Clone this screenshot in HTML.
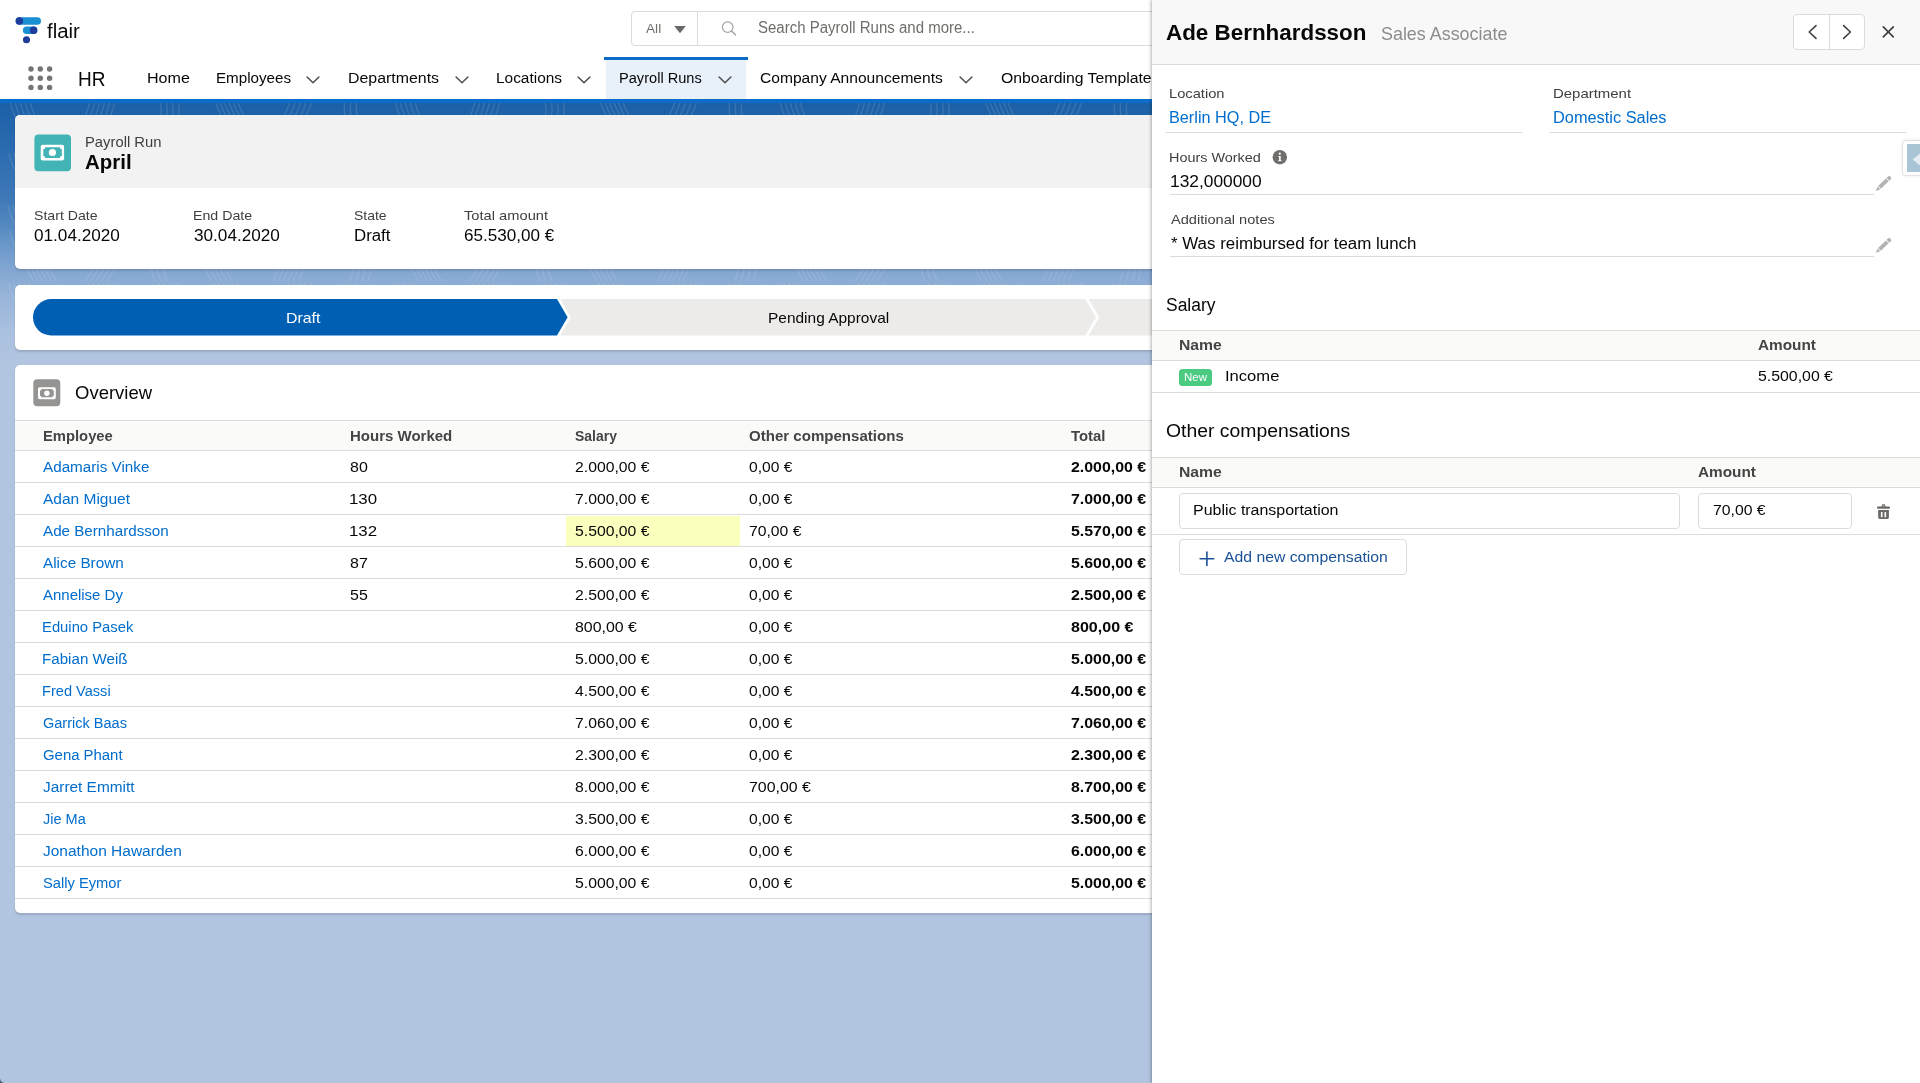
<!DOCTYPE html>
<html lang="en">
<head>
<meta charset="utf-8">
<title>April | Payroll Run | flair HR</title>
<style>
*{box-sizing:border-box;margin:0;padding:0}
html,body{width:1920px;height:1083px;overflow:hidden}
body{position:relative;background:#b1c5e0;font-family:"Liberation Sans",sans-serif;color:#080707}
.abs,.t{position:absolute}
.t{white-space:nowrap;line-height:1;display:block;transform-origin:0 0}
a.t{text-decoration:none}
#banner{left:0;top:101px;width:1152px;height:262px;background:linear-gradient(180deg,#1b5fa6 0px,#2467ad 30px,#2d6db1 55px,#3f79b8 99px,#5589c1 125px,#6f9bcb 149px,#87a9d3 174px,#9ab6da 199px,#a9c0df 229px,#b1c5e0 259px)}
#hdr{left:0;top:0;width:1920px;height:99px;background:#fff}
#hdrline{left:0;top:99px;width:1920px;height:4px;background:#0b6cc9}
.card{background:#fff;border-radius:5px;box-shadow:0 2px 2px rgba(0,0,0,.13),0 0 1px rgba(0,0,0,.10)}
.hl{height:1px;background:#dddbda}
#panel{left:1152px;top:0;width:768px;height:1083px;background:#fff;box-shadow:-1px 0 3px rgba(0,0,0,.30)}
#panel .in{position:absolute;left:-1152px;top:0;width:1920px;height:1083px}
.box{background:#fff;border:1px solid #dddbda;border-radius:4px}
</style>
</head>
<body>
<div class="abs" id="banner"></div>
<!--TOPO-->
<svg class="abs" style="left:0;top:101px" width="1152" height="262" viewBox="0 0 1152 262">
<defs><pattern id="topo" width="385" height="130" patternUnits="userSpaceOnUse"><path d="M10.0 0 Q12.0 12.0 20.0 24 M15.0 0 Q17.0 12.0 25.0 24 M20.0 0 Q22.0 12.0 30.0 24 M25.0 0 Q27.0 12.0 35.0 24 M30.0 0 Q32.0 12.0 40.0 24 M90.0 0 Q87.5 12.0 81.0 24 M95.0 0 Q92.5 12.0 86.0 24 M100.0 0 Q97.5 12.0 91.0 24 M105.0 0 Q102.5 12.0 96.0 24 M110.0 0 Q107.5 12.0 101.0 24 M115.0 0 Q112.5 12.0 106.0 24 M160.0 0 Q163.0 12.0 158.0 24 M166.0 0 Q169.0 12.0 164.0 24 M172.0 0 Q175.0 12.0 170.0 24 M178.0 0 Q181.0 12.0 176.0 24 M215.0 0 Q219.0 12.0 227.0 24 M219.5 0 Q223.5 12.0 231.5 24 M224.0 0 Q228.0 12.0 236.0 24 M228.5 0 Q232.5 12.0 240.5 24 M233.0 0 Q237.0 12.0 245.0 24 M237.5 0 Q241.5 12.0 249.5 24 M290.0 0 Q287.0 12.0 278.0 24 M295.5 0 Q292.5 12.0 283.5 24 M301.0 0 Q298.0 12.0 289.0 24 M306.5 0 Q303.5 12.0 294.5 24 M312.0 0 Q309.0 12.0 300.0 24 M345.0 0 Q342.5 12.0 348.0 24 M351.0 0 Q348.5 12.0 354.0 24 M357.0 0 Q354.5 12.0 360.0 24 M202.0 26 Q204.0 38.0 212.0 50 M207.0 26 Q209.0 38.0 217.0 50 M212.0 26 Q214.0 38.0 222.0 50 M217.0 26 Q219.0 38.0 227.0 50 M222.0 26 Q224.0 38.0 232.0 50 M282.0 26 Q279.5 38.0 273.0 50 M287.0 26 Q284.5 38.0 278.0 50 M292.0 26 Q289.5 38.0 283.0 50 M297.0 26 Q294.5 38.0 288.0 50 M302.0 26 Q299.5 38.0 293.0 50 M307.0 26 Q304.5 38.0 298.0 50 M352.0 26 Q355.0 38.0 350.0 50 M358.0 26 Q361.0 38.0 356.0 50 M364.0 26 Q367.0 38.0 362.0 50 M370.0 26 Q373.0 38.0 368.0 50 M22.0 26 Q26.0 38.0 34.0 50 M26.5 26 Q30.5 38.0 38.5 50 M31.0 26 Q35.0 38.0 43.0 50 M35.5 26 Q39.5 38.0 47.5 50 M40.0 26 Q44.0 38.0 52.0 50 M44.5 26 Q48.5 38.0 56.5 50 M97.0 26 Q94.0 38.0 85.0 50 M102.5 26 Q99.5 38.0 90.5 50 M108.0 26 Q105.0 38.0 96.0 50 M113.5 26 Q110.5 38.0 101.5 50 M119.0 26 Q116.0 38.0 107.0 50 M152.0 26 Q149.5 38.0 155.0 50 M158.0 26 Q155.5 38.0 161.0 50 M164.0 26 Q161.5 38.0 167.0 50 M9.0 52 Q11.0 64.0 19.0 76 M14.0 52 Q16.0 64.0 24.0 76 M19.0 52 Q21.0 64.0 29.0 76 M24.0 52 Q26.0 64.0 34.0 76 M29.0 52 Q31.0 64.0 39.0 76 M89.0 52 Q86.5 64.0 80.0 76 M94.0 52 Q91.5 64.0 85.0 76 M99.0 52 Q96.5 64.0 90.0 76 M104.0 52 Q101.5 64.0 95.0 76 M109.0 52 Q106.5 64.0 100.0 76 M114.0 52 Q111.5 64.0 105.0 76 M159.0 52 Q162.0 64.0 157.0 76 M165.0 52 Q168.0 64.0 163.0 76 M171.0 52 Q174.0 64.0 169.0 76 M177.0 52 Q180.0 64.0 175.0 76 M214.0 52 Q218.0 64.0 226.0 76 M218.5 52 Q222.5 64.0 230.5 76 M223.0 52 Q227.0 64.0 235.0 76 M227.5 52 Q231.5 64.0 239.5 76 M232.0 52 Q236.0 64.0 244.0 76 M236.5 52 Q240.5 64.0 248.5 76 M289.0 52 Q286.0 64.0 277.0 76 M294.5 52 Q291.5 64.0 282.5 76 M300.0 52 Q297.0 64.0 288.0 76 M305.5 52 Q302.5 64.0 293.5 76 M311.0 52 Q308.0 64.0 299.0 76 M344.0 52 Q341.5 64.0 347.0 76 M350.0 52 Q347.5 64.0 353.0 76 M356.0 52 Q353.5 64.0 359.0 76 M201.0 78 Q203.0 90.0 211.0 102 M206.0 78 Q208.0 90.0 216.0 102 M211.0 78 Q213.0 90.0 221.0 102 M216.0 78 Q218.0 90.0 226.0 102 M221.0 78 Q223.0 90.0 231.0 102 M281.0 78 Q278.5 90.0 272.0 102 M286.0 78 Q283.5 90.0 277.0 102 M291.0 78 Q288.5 90.0 282.0 102 M296.0 78 Q293.5 90.0 287.0 102 M301.0 78 Q298.5 90.0 292.0 102 M306.0 78 Q303.5 90.0 297.0 102 M351.0 78 Q354.0 90.0 349.0 102 M357.0 78 Q360.0 90.0 355.0 102 M363.0 78 Q366.0 90.0 361.0 102 M369.0 78 Q372.0 90.0 367.0 102 M21.0 78 Q25.0 90.0 33.0 102 M25.5 78 Q29.5 90.0 37.5 102 M30.0 78 Q34.0 90.0 42.0 102 M34.5 78 Q38.5 90.0 46.5 102 M39.0 78 Q43.0 90.0 51.0 102 M43.5 78 Q47.5 90.0 55.5 102 M96.0 78 Q93.0 90.0 84.0 102 M101.5 78 Q98.5 90.0 89.5 102 M107.0 78 Q104.0 90.0 95.0 102 M112.5 78 Q109.5 90.0 100.5 102 M118.0 78 Q115.0 90.0 106.0 102 M151.0 78 Q148.5 90.0 154.0 102 M157.0 78 Q154.5 90.0 160.0 102 M163.0 78 Q160.5 90.0 166.0 102 M8.0 104 Q10.0 116.0 18.0 128 M13.0 104 Q15.0 116.0 23.0 128 M18.0 104 Q20.0 116.0 28.0 128 M23.0 104 Q25.0 116.0 33.0 128 M28.0 104 Q30.0 116.0 38.0 128 M88.0 104 Q85.5 116.0 79.0 128 M93.0 104 Q90.5 116.0 84.0 128 M98.0 104 Q95.5 116.0 89.0 128 M103.0 104 Q100.5 116.0 94.0 128 M108.0 104 Q105.5 116.0 99.0 128 M113.0 104 Q110.5 116.0 104.0 128 M158.0 104 Q161.0 116.0 156.0 128 M164.0 104 Q167.0 116.0 162.0 128 M170.0 104 Q173.0 116.0 168.0 128 M176.0 104 Q179.0 116.0 174.0 128 M213.0 104 Q217.0 116.0 225.0 128 M217.5 104 Q221.5 116.0 229.5 128 M222.0 104 Q226.0 116.0 234.0 128 M226.5 104 Q230.5 116.0 238.5 128 M231.0 104 Q235.0 116.0 243.0 128 M235.5 104 Q239.5 116.0 247.5 128 M288.0 104 Q285.0 116.0 276.0 128 M293.5 104 Q290.5 116.0 281.5 128 M299.0 104 Q296.0 116.0 287.0 128 M304.5 104 Q301.5 116.0 292.5 128 M310.0 104 Q307.0 116.0 298.0 128 M343.0 104 Q340.5 116.0 346.0 128 M349.0 104 Q346.5 116.0 352.0 128 M355.0 104 Q352.5 116.0 358.0 128" fill="none" stroke="#fff" stroke-opacity=".13" stroke-width="1.2"/></pattern>
<linearGradient id="tfade" x1="0" y1="0" x2="0" y2="1"><stop offset="0" stop-color="#fff" stop-opacity="1"/><stop offset=".7" stop-color="#fff" stop-opacity=".9"/><stop offset="1" stop-color="#fff" stop-opacity="0"/></linearGradient>
<mask id="tmask"><rect width="1152" height="262" fill="url(#tfade)"/></mask></defs>
<rect width="1152" height="262" fill="url(#topo)" mask="url(#tmask)"/></svg>
<div class="abs" id="hdr"></div>
<div class="abs" id="hdrline"></div>

<!-- logo -->
<svg class="abs" style="left:14px;top:15px" width="30" height="32" viewBox="14 15 30 32">
<rect x="15.6" y="17.3" width="25.4" height="7.5" rx="3.75" fill="#1a8fd1"/>
<circle cx="19.4" cy="21.05" r="3.75" fill="#1e3c9c"/>
<rect x="22.9" y="26.5" width="14.4" height="7.5" rx="3.75" fill="#1a8fd1"/>
<circle cx="33.6" cy="30.25" r="3.75" fill="#1e3c9c"/>
<circle cx="26.5" cy="39.8" r="3.55" fill="#1e3c9c"/>
</svg>

<!-- search -->
<div class="abs box" style="left:631px;top:11px;width:560px;height:35px;border-color:#dddbda"></div>
<div class="abs" style="left:697px;top:12px;width:1px;height:33px;background:#dddbda"></div>
<svg class="abs" style="left:670px;top:20px" width="72" height="20" viewBox="670 20 72 20"><path d="M674.2 25.9 L685.8 25.9 L680 33.3 Z" fill="#6b6966"/><circle cx="727.7" cy="27.1" r="5.3" fill="none" stroke="#a5a3a1" stroke-width="1.25"/><path d="M731.6 31 L735.6 34.9" stroke="#a5a3a1" stroke-width="1.4" stroke-linecap="round"/></svg>

<!-- nav -->
<svg class="abs" style="left:28px;top:66px" width="25" height="25" viewBox="0 0 25 25" fill="#747474">
<circle cx="3" cy="3" r="2.7"/><circle cx="12.3" cy="3" r="2.7"/><circle cx="21.6" cy="3" r="2.7"/>
<circle cx="3" cy="12.2" r="2.7"/><circle cx="12.3" cy="12.2" r="2.7"/><circle cx="21.6" cy="12.2" r="2.7"/>
<circle cx="3" cy="21.4" r="2.7"/><circle cx="12.3" cy="21.4" r="2.7"/><circle cx="21.6" cy="21.4" r="2.7"/>
</svg>
<div class="abs" style="left:606px;top:58px;width:140px;height:41px;background:#e8f0fa"></div>
<div class="abs" style="left:604px;top:56.5px;width:143.5px;height:3.6px;background:#0b6cc9"></div>
<svg class="abs" style="left:305.3px;top:74px" width="16" height="12" viewBox="0 0 16 12"><path d="M2.1 3 L8 8.7 L13.9 3" fill="none" stroke="#514f4d" stroke-width="1.55" stroke-linecap="round" stroke-linejoin="round"/></svg>
<svg class="abs" style="left:453.7px;top:74px" width="16" height="12" viewBox="0 0 16 12"><path d="M2.1 3 L8 8.7 L13.9 3" fill="none" stroke="#514f4d" stroke-width="1.55" stroke-linecap="round" stroke-linejoin="round"/></svg>
<svg class="abs" style="left:576.0px;top:74px" width="16" height="12" viewBox="0 0 16 12"><path d="M2.1 3 L8 8.7 L13.9 3" fill="none" stroke="#514f4d" stroke-width="1.55" stroke-linecap="round" stroke-linejoin="round"/></svg>
<svg class="abs" style="left:716.6px;top:74px" width="16" height="12" viewBox="0 0 16 12"><path d="M2.1 3 L8 8.7 L13.9 3" fill="none" stroke="#514f4d" stroke-width="1.55" stroke-linecap="round" stroke-linejoin="round"/></svg>
<svg class="abs" style="left:958.0px;top:74px" width="16" height="12" viewBox="0 0 16 12"><path d="M2.1 3 L8 8.7 L13.9 3" fill="none" stroke="#514f4d" stroke-width="1.55" stroke-linecap="round" stroke-linejoin="round"/></svg>


<!-- card 1 -->
<div class="abs card" style="left:14.5px;top:115px;width:1160px;height:154px;overflow:hidden">
  <div class="abs" style="left:0;top:0;width:1160px;height:73px;background:#f3f2f2"></div>
</div>
<svg class="abs" style="left:34px;top:134px" width="38" height="38" viewBox="34 134 38 38">
<rect x="34.4" y="134.4" width="36.6" height="36.8" rx="4" fill="#42b4b5"/>
<rect x="40.7" y="144.8" width="23.4" height="15.7" rx="2" fill="#fff"/>
<path d="M45.3 147.3 H59.8 Q59.8 149.3 61.8 149.3 V156 Q59.8 156 59.8 158 H45.3 Q45.3 156 43.3 156 V149.3 Q45.3 149.3 45.3 147.3 Z" fill="#42b4b5"/>
<circle cx="52.4" cy="152.5" r="3.6" fill="#fff"/>
</svg>

<!-- card 2 : path -->
<div class="abs card" style="left:14.5px;top:284.6px;width:1160px;height:65px"></div>
<svg class="abs" style="left:30px;top:297px" width="1130" height="42" viewBox="30 297 1130 42">
<path d="M560.2 299.1 L1085.4 299.1 L1096 317.3 L1085.4 335.5 L560.2 335.5 L570.8 317.3 Z" fill="#ecebea"/>
<path d="M1088.6 299.1 L1160 299.1 L1160 335.5 L1088.6 335.5 L1099.2 317.3 Z" fill="#ecebea"/>
<path d="M51.2 299.1 L557 299.1 L567.6 317.3 L557 335.5 L51.2 335.5 A18.2 18.2 0 0 1 51.2 299.1 Z" fill="#005fb2"/>
</svg>

<!-- card 3 : overview -->
<div class="abs card" style="left:14.5px;top:365px;width:1160px;height:548.4px"></div>
<svg class="abs" style="left:33px;top:379px" width="28" height="28" viewBox="33 379 28 28">
<rect x="33.3" y="379.2" width="27" height="27" rx="4" fill="#969492"/>
<rect x="38" y="387.2" width="17.8" height="12" rx="1.6" fill="#fff"/>
<path d="M41.5 389.1 H52.3 Q52.3 390.6 53.8 390.6 V395.8 Q52.3 395.8 52.3 397.3 H41.5 Q41.5 395.8 40 395.8 V390.6 Q41.5 390.6 41.5 389.1 Z" fill="#969492"/>
<circle cx="46.9" cy="393.2" r="2.7" fill="#fff"/>
</svg>
<div class="abs" style="left:15px;top:421px;width:1160px;height:30px;background:#fafaf9"></div>
<div class="abs hl" style="left:15px;top:420px;width:1160px"></div>
<div class="abs hl" style="left:15px;top:450px;width:1160px"></div>
<div class="abs hl" style="left:15px;top:482px;width:1160px"></div>
<div class="abs hl" style="left:15px;top:514px;width:1160px"></div>
<div class="abs hl" style="left:15px;top:546px;width:1160px"></div>
<div class="abs hl" style="left:15px;top:578px;width:1160px"></div>
<div class="abs hl" style="left:15px;top:610px;width:1160px"></div>
<div class="abs hl" style="left:15px;top:642px;width:1160px"></div>
<div class="abs hl" style="left:15px;top:674px;width:1160px"></div>
<div class="abs hl" style="left:15px;top:706px;width:1160px"></div>
<div class="abs hl" style="left:15px;top:738px;width:1160px"></div>
<div class="abs hl" style="left:15px;top:770px;width:1160px"></div>
<div class="abs hl" style="left:15px;top:802px;width:1160px"></div>
<div class="abs hl" style="left:15px;top:834px;width:1160px"></div>
<div class="abs hl" style="left:15px;top:866px;width:1160px"></div>
<div class="abs hl" style="left:15px;top:898px;width:1160px"></div>

<div class="abs" style="left:566px;top:515.5px;width:174px;height:30.5px;background:#faffbd"></div>

<span class="t" style="left:46.90px;top:22px;font-size:19.4px;transform:scaleX(1.0539);color:#0b0b0b">flair</span>
<span class="t" style="left:646.00px;top:22px;font-size:13.4px;transform:scaleX(1.0197);color:#706e6b">All</span>
<span class="t" style="left:757.70px;top:20px;font-size:15.6px;transform:scaleX(0.9624);color:#706e6b">Search Payroll Runs and more...</span>
<span class="t" style="left:77.79px;top:69px;font-size:20.8px;transform:scaleX(0.9132);color:#080707">HR</span>
<span class="t" style="left:146.65px;top:70px;font-size:15.4px;transform:scaleX(1.0457);color:#080707">Home</span>
<span class="t" style="left:216.31px;top:70px;font-size:15.4px;transform:scaleX(0.9862);color:#080707">Employees</span>
<span class="t" style="left:347.97px;top:70px;font-size:15.4px;transform:scaleX(1.0331);color:#080707">Departments</span>
<span class="t" style="left:496.00px;top:70px;font-size:15.4px;transform:scaleX(1.0017);color:#080707">Locations</span>
<span class="t" style="left:619.45px;top:70px;font-size:15.4px;transform:scaleX(0.9485);color:#080707">Payroll Runs</span>
<span class="t" style="left:760.00px;top:70px;font-size:15.4px;transform:scaleX(1.0128);color:#080707">Company Announcements</span>
<span class="t" style="left:1001.30px;top:70px;font-size:15.4px;transform:scaleX(1.0253);color:#080707">Onboarding Template</span>
<span class="t" style="left:1152.80px;top:70px;font-size:15.4px;transform:scaleX(0.8125);color:#080707">s</span>
<span class="t" style="left:84.66px;top:135px;font-size:14.2px;transform:scaleX(1.0428);color:#3e3e3c">Payroll Run</span>
<span class="t" style="left:84.60px;top:152px;font-size:20.8px;transform:scaleX(0.9830);color:#080707;font-weight:700">April</span>
<span class="t" style="left:34.00px;top:209px;font-size:13.6px;transform:scaleX(1.0389);color:#3e3e3c">Start Date</span>
<span class="t" style="left:34.00px;top:228px;font-size:16px;transform:scaleX(1.0726);color:#080707">01.04.2020</span>
<span class="t" style="left:192.96px;top:209px;font-size:13.6px;transform:scaleX(1.0432);color:#3e3e3c">End Date</span>
<span class="t" style="left:194.00px;top:228px;font-size:16px;transform:scaleX(1.0726);color:#080707">30.04.2020</span>
<span class="t" style="left:354.00px;top:209px;font-size:13.6px;transform:scaleX(1.0263);color:#3e3e3c">State</span>
<span class="t" style="left:353.55px;top:228px;font-size:16px;transform:scaleX(1.0518);color:#080707">Draft</span>
<span class="t" style="left:463.70px;top:209px;font-size:13.6px;transform:scaleX(1.0800);color:#3e3e3c">Total amount</span>
<span class="t" style="left:464.10px;top:228px;font-size:16px;transform:scaleX(1.0671);color:#080707">65.530,00 €</span>
<span class="t" style="left:285.61px;top:311px;font-size:14.6px;transform:scaleX(1.0893);color:#ffffff">Draft</span>
<span class="t" style="left:768.24px;top:311px;font-size:14.6px;transform:scaleX(1.0591);color:#080707">Pending Approval</span>
<span class="t" style="left:75.00px;top:384px;font-size:18.4px;transform:scaleX(1.0057);color:#080707">Overview</span>
<span class="t" style="left:42.70px;top:429px;font-size:14.7px;transform:scaleX(1.0055);color:#444444;font-weight:700">Employee</span>
<span class="t" style="left:350.00px;top:429px;font-size:14.7px;transform:scaleX(1.0218);color:#444444;font-weight:700">Hours Worked</span>
<span class="t" style="left:575.00px;top:429px;font-size:14.7px;transform:scaleX(0.9504);color:#444444;font-weight:700">Salary</span>
<span class="t" style="left:748.70px;top:429px;font-size:14.7px;transform:scaleX(1.0251);color:#444444;font-weight:700">Other compensations</span>
<span class="t" style="left:1071.00px;top:429px;font-size:14.7px;transform:scaleX(1.0114);color:#444444;font-weight:700">Total</span>
<span class="t" style="left:42.70px;top:459px;font-size:15.2px;transform:scaleX(1.0034);color:#006dcc">Adamaris Vinke</span>
<span class="t" style="left:350.00px;top:459px;font-size:15.2px;transform:scaleX(1.0519);color:#080707">80</span>
<span class="t" style="left:575.00px;top:459px;font-size:15.2px;transform:scaleX(1.0368);color:#080707">2.000,00 €</span>
<span class="t" style="left:748.70px;top:459px;font-size:15.2px;transform:scaleX(1.0285);color:#080707">0,00 €</span>
<span class="t" style="left:1071.00px;top:459px;font-size:15.2px;transform:scaleX(1.0465);color:#080707;font-weight:700">2.000,00 €</span>
<span class="t" style="left:42.70px;top:491px;font-size:15.2px;transform:scaleX(1.0203);color:#006dcc">Adan Miguet</span>
<span class="t" style="left:348.89px;top:491px;font-size:15.2px;transform:scaleX(1.1091);color:#080707">130</span>
<span class="t" style="left:575.00px;top:491px;font-size:15.2px;transform:scaleX(1.0368);color:#080707">7.000,00 €</span>
<span class="t" style="left:748.70px;top:491px;font-size:15.2px;transform:scaleX(1.0285);color:#080707">0,00 €</span>
<span class="t" style="left:1071.00px;top:491px;font-size:15.2px;transform:scaleX(1.0465);color:#080707;font-weight:700">7.000,00 €</span>
<span class="t" style="left:42.70px;top:523px;font-size:15.2px;transform:scaleX(0.9996);color:#006dcc">Ade Bernhardsson</span>
<span class="t" style="left:348.89px;top:523px;font-size:15.2px;transform:scaleX(1.1091);color:#080707">132</span>
<span class="t" style="left:575.00px;top:523px;font-size:15.2px;transform:scaleX(1.0368);color:#080707">5.500,00 €</span>
<span class="t" style="left:748.70px;top:523px;font-size:15.2px;transform:scaleX(1.0346);color:#080707">70,00 €</span>
<span class="t" style="left:1071.00px;top:523px;font-size:15.2px;transform:scaleX(1.0465);color:#080707;font-weight:700">5.570,00 €</span>
<span class="t" style="left:42.70px;top:555px;font-size:15.2px;transform:scaleX(1.0070);color:#006dcc">Alice Brown</span>
<span class="t" style="left:350.00px;top:555px;font-size:15.2px;transform:scaleX(1.0519);color:#080707">87</span>
<span class="t" style="left:575.00px;top:555px;font-size:15.2px;transform:scaleX(1.0368);color:#080707">5.600,00 €</span>
<span class="t" style="left:748.70px;top:555px;font-size:15.2px;transform:scaleX(1.0285);color:#080707">0,00 €</span>
<span class="t" style="left:1071.00px;top:555px;font-size:15.2px;transform:scaleX(1.0465);color:#080707;font-weight:700">5.600,00 €</span>
<span class="t" style="left:42.70px;top:587px;font-size:15.2px;transform:scaleX(0.9859);color:#006dcc">Annelise Dy</span>
<span class="t" style="left:350.00px;top:587px;font-size:15.2px;transform:scaleX(1.0519);color:#080707">55</span>
<span class="t" style="left:575.00px;top:587px;font-size:15.2px;transform:scaleX(1.0368);color:#080707">2.500,00 €</span>
<span class="t" style="left:748.70px;top:587px;font-size:15.2px;transform:scaleX(1.0285);color:#080707">0,00 €</span>
<span class="t" style="left:1071.00px;top:587px;font-size:15.2px;transform:scaleX(1.0465);color:#080707;font-weight:700">2.500,00 €</span>
<span class="t" style="left:41.72px;top:619px;font-size:15.2px;transform:scaleX(0.9750);color:#006dcc">Eduino Pasek</span>
<span class="t" style="left:575.00px;top:619px;font-size:15.2px;transform:scaleX(1.0474);color:#080707">800,00 €</span>
<span class="t" style="left:748.70px;top:619px;font-size:15.2px;transform:scaleX(1.0285);color:#080707">0,00 €</span>
<span class="t" style="left:1071.00px;top:619px;font-size:15.2px;transform:scaleX(1.0558);color:#080707;font-weight:700">800,00 €</span>
<span class="t" style="left:41.70px;top:651px;font-size:15.2px;transform:scaleX(0.9972);color:#006dcc">Fabian Weiß</span>
<span class="t" style="left:575.00px;top:651px;font-size:15.2px;transform:scaleX(1.0368);color:#080707">5.000,00 €</span>
<span class="t" style="left:748.70px;top:651px;font-size:15.2px;transform:scaleX(1.0285);color:#080707">0,00 €</span>
<span class="t" style="left:1071.00px;top:651px;font-size:15.2px;transform:scaleX(1.0465);color:#080707;font-weight:700">5.000,00 €</span>
<span class="t" style="left:41.74px;top:683px;font-size:15.2px;transform:scaleX(0.9603);color:#006dcc">Fred Vassi</span>
<span class="t" style="left:575.00px;top:683px;font-size:15.2px;transform:scaleX(1.0368);color:#080707">4.500,00 €</span>
<span class="t" style="left:748.70px;top:683px;font-size:15.2px;transform:scaleX(1.0285);color:#080707">0,00 €</span>
<span class="t" style="left:1071.00px;top:683px;font-size:15.2px;transform:scaleX(1.0465);color:#080707;font-weight:700">4.500,00 €</span>
<span class="t" style="left:42.70px;top:715px;font-size:15.2px;transform:scaleX(0.9560);color:#006dcc">Garrick Baas</span>
<span class="t" style="left:575.00px;top:715px;font-size:15.2px;transform:scaleX(1.0368);color:#080707">7.060,00 €</span>
<span class="t" style="left:748.70px;top:715px;font-size:15.2px;transform:scaleX(1.0285);color:#080707">0,00 €</span>
<span class="t" style="left:1071.00px;top:715px;font-size:15.2px;transform:scaleX(1.0465);color:#080707;font-weight:700">7.060,00 €</span>
<span class="t" style="left:42.70px;top:747px;font-size:15.2px;transform:scaleX(0.9812);color:#006dcc">Gena Phant</span>
<span class="t" style="left:575.00px;top:747px;font-size:15.2px;transform:scaleX(1.0368);color:#080707">2.300,00 €</span>
<span class="t" style="left:748.70px;top:747px;font-size:15.2px;transform:scaleX(1.0285);color:#080707">0,00 €</span>
<span class="t" style="left:1071.00px;top:747px;font-size:15.2px;transform:scaleX(1.0465);color:#080707;font-weight:700">2.300,00 €</span>
<span class="t" style="left:42.70px;top:779px;font-size:15.2px;transform:scaleX(1.0135);color:#006dcc">Jarret Emmitt</span>
<span class="t" style="left:575.00px;top:779px;font-size:15.2px;transform:scaleX(1.0368);color:#080707">8.000,00 €</span>
<span class="t" style="left:748.70px;top:779px;font-size:15.2px;transform:scaleX(1.0474);color:#080707">700,00 €</span>
<span class="t" style="left:1071.00px;top:779px;font-size:15.2px;transform:scaleX(1.0465);color:#080707;font-weight:700">8.700,00 €</span>
<span class="t" style="left:42.70px;top:811px;font-size:15.2px;transform:scaleX(0.9562);color:#006dcc">Jie Ma</span>
<span class="t" style="left:575.00px;top:811px;font-size:15.2px;transform:scaleX(1.0368);color:#080707">3.500,00 €</span>
<span class="t" style="left:748.70px;top:811px;font-size:15.2px;transform:scaleX(1.0285);color:#080707">0,00 €</span>
<span class="t" style="left:1071.00px;top:811px;font-size:15.2px;transform:scaleX(1.0465);color:#080707;font-weight:700">3.500,00 €</span>
<span class="t" style="left:42.70px;top:843px;font-size:15.2px;transform:scaleX(1.0207);color:#006dcc">Jonathon Hawarden</span>
<span class="t" style="left:575.00px;top:843px;font-size:15.2px;transform:scaleX(1.0368);color:#080707">6.000,00 €</span>
<span class="t" style="left:748.70px;top:843px;font-size:15.2px;transform:scaleX(1.0285);color:#080707">0,00 €</span>
<span class="t" style="left:1071.00px;top:843px;font-size:15.2px;transform:scaleX(1.0465);color:#080707;font-weight:700">6.000,00 €</span>
<span class="t" style="left:42.70px;top:875px;font-size:15.2px;transform:scaleX(0.9671);color:#006dcc">Sally Eymor</span>
<span class="t" style="left:575.00px;top:875px;font-size:15.2px;transform:scaleX(1.0368);color:#080707">5.000,00 €</span>
<span class="t" style="left:748.70px;top:875px;font-size:15.2px;transform:scaleX(1.0285);color:#080707">0,00 €</span>
<span class="t" style="left:1071.00px;top:875px;font-size:15.2px;transform:scaleX(1.0465);color:#080707;font-weight:700">5.000,00 €</span>

<div class="abs" id="corner" style="left:0;top:1079px;width:4px;height:4px;background:radial-gradient(circle at 100% 0,rgba(70,80,100,0) 3.2px,rgba(70,80,100,.9) 4.2px)"></div>

<!-- side panel -->
<div class="abs" id="panel"><div class="in">
<div class="abs" style="left:1152px;top:0;width:768px;height:64px;background:#f8f8f8"></div>
<div class="abs hl" style="left:1152px;top:64px;width:768px"></div>
<div class="abs box" style="left:1793px;top:14px;width:72px;height:36px"></div>
<div class="abs" style="left:1829px;top:15px;width:1px;height:34px;background:#dddbda"></div>
<svg class="abs" style="left:1800px;top:20px" width="100" height="24" viewBox="1800 20 100 24" fill="none" stroke="#3e3e3c" stroke-width="1.5" stroke-linecap="round" stroke-linejoin="round">
<path d="M1816 25.6 L1809.2 32 L1816 38.4"/>
<path d="M1843.6 25.6 L1850.4 32 L1843.6 38.4"/>
<path d="M1883.3 26.9 L1893.3 36.9 M1893.3 26.9 L1883.3 36.9" stroke-width="1.6"/>
</svg>
<div class="abs hl" style="left:1166px;top:132px;width:356px"></div>
<div class="abs hl" style="left:1550px;top:132px;width:356px"></div>
<div class="abs hl" style="left:1170px;top:194px;width:704px"></div>
<div class="abs hl" style="left:1170px;top:256px;width:704px"></div>
<!-- info icon -->
<svg class="abs" style="left:1272px;top:149px" width="16" height="16" viewBox="0 0 16 16"><circle cx="7.8" cy="8.2" r="7.2" fill="#706e6b"/><circle cx="7.8" cy="4.7" r="1.1" fill="#fff"/><path d="M6.4 7 H8.7 V11.2 H9.5 V12.2 H6.3 V11.2 H7.1 V8 H6.4 Z" fill="#fff"/></svg>
<!-- pencils -->
<svg class="abs" style="left:1870px;top:170px" width="26" height="90" viewBox="1870 170 26 90"><g transform="translate(1875.9 190.9) rotate(-44)"><g fill="#b5b3b1"><path d="M0 0 L4.2 -2 L4.2 2 Z"/><rect x="5" y="-2" width="10.8" height="4"/><path d="M16.6 -2 H18.8 Q20.3 -2 20.3 -0.6 V0.6 Q20.3 2 18.8 2 H16.6 Z"/></g></g><g transform="translate(1875.9 252.8) rotate(-44)"><g fill="#b5b3b1"><path d="M0 0 L4.2 -2 L4.2 2 Z"/><rect x="5" y="-2" width="10.8" height="4"/><path d="M16.6 -2 H18.8 Q20.3 -2 20.3 -0.6 V0.6 Q20.3 2 18.8 2 H16.6 Z"/></g></g></svg>
<!-- right edge widget -->
<div class="abs" style="left:1901.5px;top:139.7px;width:26px;height:36.8px;background:#fff;border:1px solid #e2e2e2;border-radius:4px;box-shadow:0 0 3px rgba(0,0,0,.10)"></div>
<div class="abs" style="left:1907.2px;top:144px;width:13px;height:28.3px;background:#a9c4d4"></div>
<svg class="abs" style="left:1910px;top:150px" width="10" height="20" viewBox="1910 150 10 20"><path d="M1912.6 159.5 L1920 153.6 L1920 165.6 Z" fill="#e4ecf2"/></svg>

<!-- salary table -->
<div class="abs" style="left:1152px;top:331px;width:768px;height:29px;background:#fafaf9"></div>
<div class="abs hl" style="left:1152px;top:330px;width:768px"></div>
<div class="abs hl" style="left:1152px;top:360px;width:768px"></div>
<div class="abs hl" style="left:1152px;top:392px;width:768px"></div>
<div class="abs" style="left:1179.4px;top:369px;width:33px;height:16.8px;background:#4bca81;border-radius:3.5px"></div>
<!-- other comp table -->
<div class="abs" style="left:1152px;top:458px;width:768px;height:29px;background:#fafaf9"></div>
<div class="abs hl" style="left:1152px;top:457px;width:768px"></div>
<div class="abs hl" style="left:1152px;top:487px;width:768px"></div>
<div class="abs hl" style="left:1152px;top:534px;width:768px"></div>
<div class="abs box" style="left:1179px;top:492.5px;width:501px;height:36px"></div>
<div class="abs box" style="left:1698px;top:492.5px;width:153.5px;height:36px"></div>
<div class="abs box" style="left:1179px;top:539px;width:228px;height:36px"></div>
<svg class="abs" style="left:1198px;top:550px" width="18" height="18" viewBox="1198 550 18 18"><path d="M1206.9 552 V565.5 M1200.1 558.7 H1213.7" stroke="#1b5297" stroke-width="1.6" stroke-linecap="round"/></svg>
<!-- trash -->
<svg class="abs" style="left:1875px;top:502px" width="18" height="20" viewBox="1875 502 18 20" fill="#6b6966"><rect x="1877" y="506.6" width="13" height="2.2" rx="1"/><path d="M1881.4 507 L1882.2 504.2 H1884.9 L1885.7 507 Z M1882.9 505.4 L1882.6 506.6 H1884.5 L1884.2 505.4 Z" fill-rule="evenodd"/><path d="M1878.2 510.1 H1888.9 V517.5 Q1888.9 518.9 1887.5 518.9 H1879.6 Q1878.2 518.9 1878.2 517.5 Z M1880.9 511.9 V517.2 H1882.5 V511.9 Z M1884.5 511.9 V517.2 H1886.1 V511.9 Z" fill-rule="evenodd"/></svg>

<span class="t" style="left:1166.20px;top:21px;font-size:22.8px;transform:scaleX(0.9827);color:#080707;font-weight:700">Ade Bernhardsson</span>
<span class="t" style="left:1381.00px;top:24px;font-size:19px;transform:scaleX(0.9420);color:#8c8c8c">Sales Associate</span>
<span class="t" style="left:1169.42px;top:87px;font-size:13.6px;transform:scaleX(1.0796);color:#3e3e3c">Location</span>
<span class="t" style="left:1169.48px;top:110px;font-size:16px;transform:scaleX(1.0152);color:#006dcc">Berlin HQ, DE</span>
<span class="t" style="left:1553.30px;top:87px;font-size:13.6px;transform:scaleX(1.0990);color:#3e3e3c">Department</span>
<span class="t" style="left:1553.38px;top:110px;font-size:16px;transform:scaleX(1.0213);color:#006dcc">Domestic Sales</span>
<span class="t" style="left:1169.44px;top:151px;font-size:13.6px;transform:scaleX(1.0592);color:#3e3e3c">Hours Worked</span>
<span class="t" style="left:1169.92px;top:174px;font-size:16px;transform:scaleX(1.0845);color:#080707">132,000000</span>
<span class="t" style="left:1170.50px;top:213px;font-size:13.6px;transform:scaleX(1.0728);color:#3e3e3c">Additional notes</span>
<span class="t" style="left:1170.50px;top:236px;font-size:16px;transform:scaleX(1.0562);color:#080707">* Was reimbursed for team lunch</span>
<span class="t" style="left:1166.00px;top:296px;font-size:18.8px;transform:scaleX(0.9286);color:#080707">Salary</span>
<span class="t" style="left:1179.40px;top:338px;font-size:14.7px;transform:scaleX(1.0694);color:#444444;font-weight:700">Name</span>
<span class="t" style="left:1757.50px;top:338px;font-size:14.7px;transform:scaleX(1.0453);color:#444444;font-weight:700">Amount</span>
<span class="t" style="left:1184.40px;top:372px;font-size:11.5px;transform:scaleX(0.9958);color:#ffffff">New</span>
<span class="t" style="left:1225.41px;top:368px;font-size:15.2px;transform:scaleX(1.0919);color:#080707">Income</span>
<span class="t" style="left:1757.50px;top:368px;font-size:15.2px;transform:scaleX(1.0437);color:#080707">5.500,00 €</span>
<span class="t" style="left:1166.00px;top:422px;font-size:18.8px;transform:scaleX(1.0319);color:#080707">Other compensations</span>
<span class="t" style="left:1179.40px;top:465px;font-size:14.7px;transform:scaleX(1.0694);color:#444444;font-weight:700">Name</span>
<span class="t" style="left:1698.20px;top:465px;font-size:14.7px;transform:scaleX(1.0453);color:#444444;font-weight:700">Amount</span>
<span class="t" style="left:1193.35px;top:502px;font-size:15.2px;transform:scaleX(1.0503);color:#080707">Public transportation</span>
<span class="t" style="left:1713.20px;top:502px;font-size:15.2px;transform:scaleX(1.0385);color:#080707">70,00 €</span>
<span class="t" style="left:1224.00px;top:549px;font-size:15.2px;transform:scaleX(1.0379);color:#1b5297">Add new compensation</span>
</div></div>
</body>
</html>
